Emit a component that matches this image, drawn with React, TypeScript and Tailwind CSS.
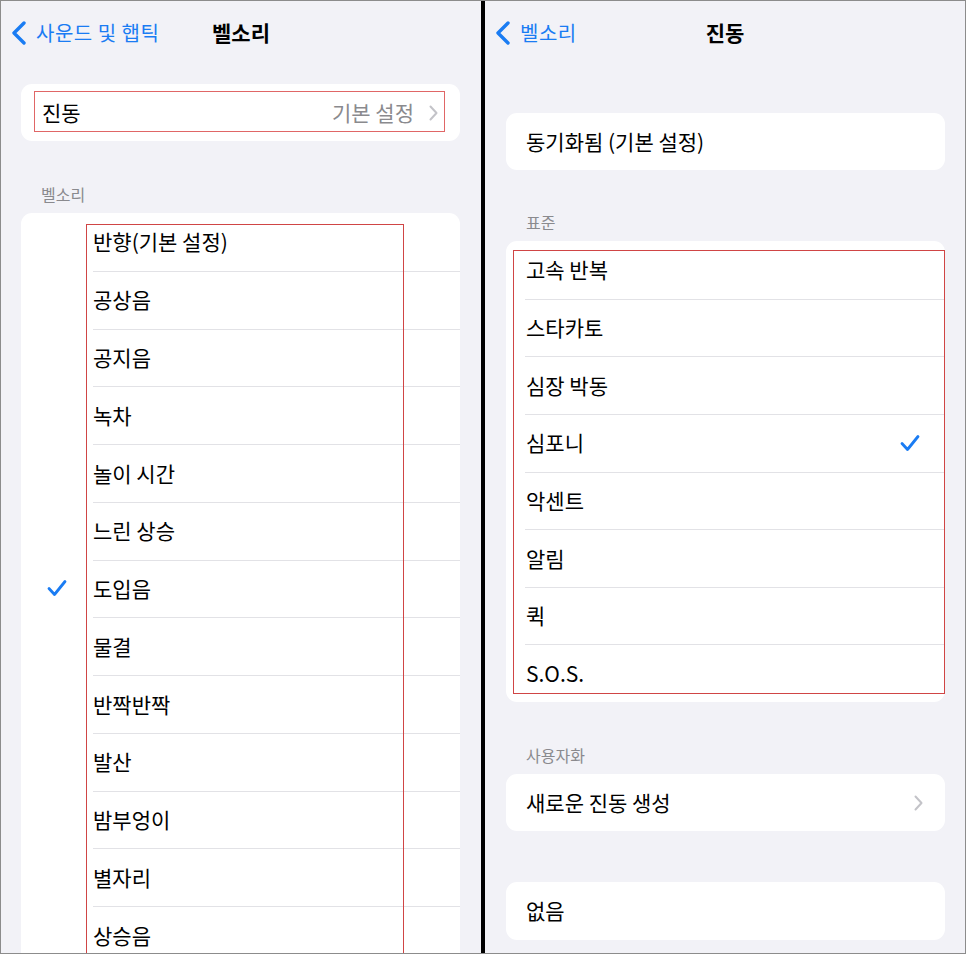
import React from 'react'

const FONT = { fontFamily: '"Noto Sans CJK KR", "Noto Sans", sans-serif' }

const ringtones = [
  '반향(기본 설정)',
  '공상음',
  '공지음',
  '녹차',
  '놀이 시간',
  '느린 상승',
  '도입음',
  '물결',
  '반짝반짝',
  '발산',
  '밤부엉이',
  '별자리',
  '상승음',
]

const patterns = ['고속 반복', '스타카토', '심장 박동', '심포니', '악센트', '알림', '퀵', 'S.O.S.']

const BackChevron = () => (
  <svg width="16" height="24" viewBox="0 0 16 24" fill="none">
    <path d="M13 2 L3 12 L13 22" stroke="#1a7cf3" strokeWidth="3.4" strokeLinecap="round" strokeLinejoin="round" />
  </svg>
)

const RowChevron = () => (
  <svg width="9" height="16" viewBox="0 0 9 16" fill="none">
    <path d="M1.5 1.5 L7.5 8 L1.5 14.5" stroke="#c3c3c8" strokeWidth="2" strokeLinecap="round" strokeLinejoin="round" />
  </svg>
)

const Check = () => (
  <svg width="20" height="18" viewBox="0 0 20 18" fill="none">
    <path d="M2 9.5 L7.5 15.5 L18 2.5" stroke="#1a7cf3" strokeWidth="2.8" strokeLinecap="round" strokeLinejoin="round" />
  </svg>
)

function NavBar({ back, title }: { back: string; title: string }) {
  return (
    <div className="relative h-[64px] flex items-center">
      <div className="flex items-center pl-[10px] gap-[9px] text-[20px] text-[#1a7cf3]">
        <BackChevron />
        <span className="tracking-[0.5px]">{back}</span>
      </div>
      <div className="absolute inset-x-0 top-0 h-full flex items-center justify-center text-[21px] font-bold text-black pointer-events-none">
        {title}
      </div>
    </div>
  )
}

function LeftPanel() {
  return (
    <div className="w-[480px] h-full bg-[#f2f2f7] overflow-hidden">
      <NavBar back="사운드 및 햅틱" title="벨소리" />

      <div className="relative mt-[19px] ml-[20px] w-[439px] h-[57px] bg-white rounded-[11px] flex items-center pl-[21px] pr-[22px] text-[21px]">
        <span className="flex-1 text-black">진동</span>
        <span className="text-[#8a8a8e] mr-[15px]">기본 설정</span>
        <RowChevron />
        <div className="absolute left-[13px] right-[15px] top-[7px] bottom-[9px] border border-[#e06666]" />
      </div>

      <div className="mt-[45px] ml-[40px] text-[16px] text-[#8a8a8e] leading-none">벨소리</div>

      <div className="relative mt-[11px] ml-[20px] w-[439px] bg-white rounded-t-[11px] pb-[40px]">
        {ringtones.map((name, i) => (
          <div key={name} className="h-[57.75px] flex">
            <div className="w-[72px] flex items-center pl-[26px]">{name === '도입음' && <Check />}</div>
            <div
              className={`flex-1 flex items-center text-[21px] text-black ${
                i > 0 ? 'border-t border-[#e2e2e6]' : ''
              }`}
            >
              {name}
            </div>
          </div>
        ))}
        <div className="absolute left-[65px] w-[318px] top-[11px] bottom-[1px] border border-[#d04545]" />
      </div>
    </div>
  )
}

function RightPanel() {
  return (
    <div className="flex-1 h-full bg-[#f2f2f7] overflow-hidden">
      <NavBar back="벨소리" title="진동" />

      <div className="mt-[48px] ml-[21px] w-[439px] h-[57px] bg-white rounded-[11px] flex items-center pl-[20px] text-[21px] text-black">
        동기화됨 (기본 설정)
      </div>

      <div className="mt-[44px] ml-[41px] text-[16px] text-[#8a8a8e] leading-none">표준</div>

      <div className="relative mt-[11px] ml-[21px] w-[439px] bg-white rounded-[11px]">
        {patterns.map((name, i) => (
          <div key={name} className="h-[57.63px] pl-[19px]">
            <div
              className={`h-full flex items-center pr-[25px] text-[21px] text-black ${
                i > 0 ? 'border-t border-[#e2e2e6]' : ''
              }`}
            >
              <span className="flex-1 pl-[1px]">{name}</span>
              {name === '심포니' && <Check />}
            </div>
          </div>
        ))}
        <div className="absolute left-[7px] right-0 top-[9px] bottom-[8px] border border-[#d04545]" />
      </div>

      <div className="mt-[45px] ml-[41px] text-[16px] text-[#8a8a8e] leading-none">사용자화</div>

      <div className="mt-[11px] ml-[21px] w-[439px] h-[57px] bg-white rounded-[11px] flex items-center pl-[20px] pr-[22px] text-[21px] text-black">
        <span className="flex-1">새로운 진동 생성</span>
        <RowChevron />
      </div>

      <div className="mt-[51px] ml-[21px] w-[439px] h-[58px] bg-white rounded-[11px] flex items-center pl-[20px] text-[21px] text-black">
        없음
      </div>
    </div>
  )
}

export default function App() {
  return (
    <div style={FONT} className="w-[966px] h-[954px] bg-[#f2f2f7]">
      <div className="w-full h-full border border-[#8c8c8c] flex">
        <LeftPanel />
        <div className="w-[4px] h-full bg-black" />
        <RightPanel />
      </div>
    </div>
  )
}
